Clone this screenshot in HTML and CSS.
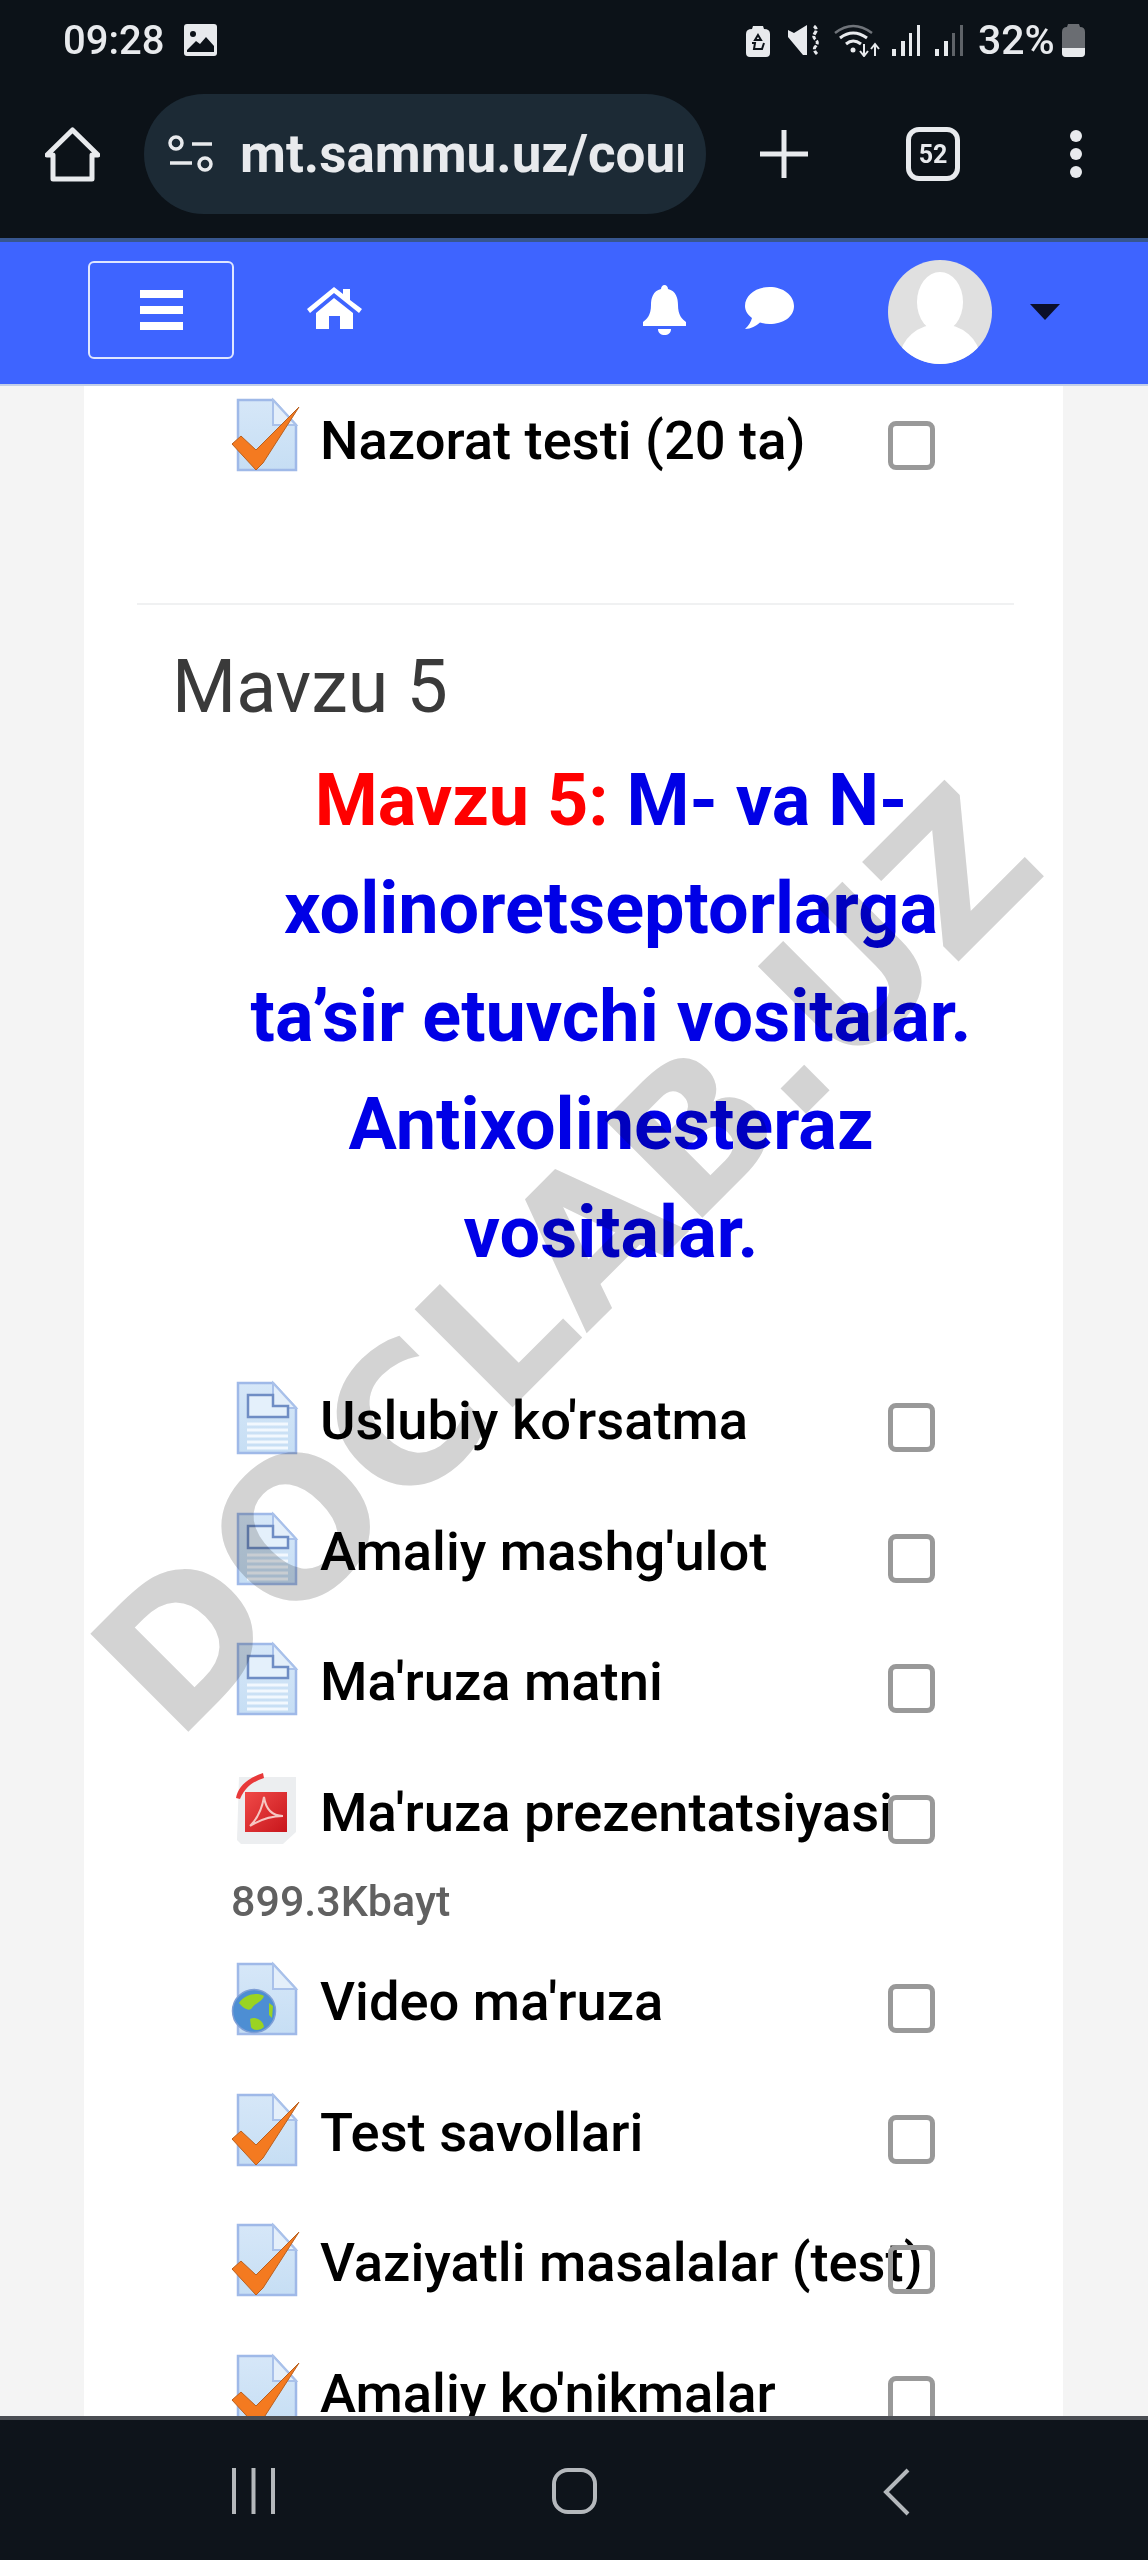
FILE: index.html
```html
<!DOCTYPE html>
<html lang="en">
<head>
    <meta charset="UTF-8">
    <meta name="viewport" content="width=device-width, initial-scale=1.0">
    <title>Mavzu 5</title>
    <link rel="stylesheet" href="styles.css">
</head>
<body>
    <!-- Shared activity icons -->
    <svg class="defs" width="0" height="0">
        <defs>
            <linearGradient id="pageFill" x1="0" y1="0" x2="0" y2="1">
                <stop offset="0" stop-color="#d6e7f8"/>
                <stop offset="1" stop-color="#c6def4"/>
            </linearGradient>
            <linearGradient id="pdfFill" x1="0" y1="0" x2="1" y2="1">
                <stop offset="0" stop-color="#f04a48"/>
                <stop offset="1" stop-color="#c8161c"/>
            </linearGradient>
            <symbol id="page" viewBox="0 0 72 76">
                <path d="M7 3H42L65 28V73H7Z" fill="url(#pageFill)" stroke="#9fb9e8" stroke-width="2.5"/>
                <path d="M42 3L65 28H42Z" fill="#e4effa" stroke="#a9c1ea" stroke-width="2"/>
            </symbol>
            <symbol id="check" viewBox="0 0 72 76">
                <path d="M1 47L10 39L25 53L68 10L32 66L25 73Z" fill="#f47a20" stroke="#b9601f" stroke-width="1"/>
            </symbol>
            <symbol id="lines" viewBox="0 0 72 76">
                <path d="M17 15H42V26H57V37H17Z" fill="#e4f0fb" stroke="#6f8dc4" stroke-width="2.5"/>
                <path d="M16 44H57M16 50H57M16 56H57M16 62H57M16 68H57" stroke="#f2f8fe" stroke-width="3"/>
            </symbol>
            <symbol id="globe" viewBox="0 0 72 76">
                <circle cx="23" cy="50" r="21.5" fill="#4d8ed3" stroke="#7f9fd6" stroke-width="1.5"/>
                <path d="M8 42C14 33 26 31 33 35C30 42 24 42 21 47C18 51 12 47 8 42Z" fill="#9ad322"/>
                <path d="M19 58C24 55 32 59 33 66C29 70 22 70 20 66Z" fill="#9ad322"/>
                <path d="M38 42L42 45L41 57L38 54Z" fill="#9ad322"/>
            </symbol>
            <symbol id="pdf" viewBox="0 0 72 76">
                <path d="M8 5H65V60L52 72H10L6 68Z" fill="#eceef0"/>
                <path d="M5 26C7 15 15 7 32 1L33 6C22 10 15 14 9 27Z" fill="#e8393a"/>
                <rect x="14" y="20" width="42" height="40" fill="url(#pdfFill)"/>
                <path d="M19 54C26 47 31 37 33 25C35 38 42 44 52 44C42 44 30 47 19 54Z" fill="none" stroke="#f6c6c2" stroke-width="2"/>
            </symbol>
        </defs>
    </svg>

    <div class="phone">
        <!-- Status bar -->
        <div class="status-bar">
            <span class="clock">09:28</span>
            <svg class="st-image" viewBox="0 0 33 32">
                <rect width="33" height="32" rx="3" fill="#e8eaed"/>
                <circle cx="9" cy="10" r="3" fill="#0c1218"/>
                <path d="M3 26L12 17L16 20L22 13L30 22V28H3Z" fill="#0c1218"/>
            </svg>
            <svg class="st-lock" viewBox="0 0 24 33">
                <path d="M7 2H17L18 5Q24 5 24 10V29Q24 33 20 33H4Q0 33 0 29V10Q0 5 6 5Z" fill="#e8eaed"/>
                <path d="M12 11L15 16H9ZM6 19L9 19L8 25H13M18 19L16 25H13" fill="none" stroke="#0c1218" stroke-width="2"/>
            </svg>
            <svg class="st-mute" viewBox="0 0 32 30">
                <path d="M0 5L6 8L19 0V30L15 30L0 12Z" fill="#e8eaed"/>
                <path d="M26 1Q30 4 27 8Q24 12 28 15Q31 18 27 22Q25 25 29 29" fill="none" stroke="#e8eaed" stroke-width="3" stroke-dasharray="4 1.500"/>
            </svg>
            <svg class="st-wifi" viewBox="0 0 48 34">
                <path d="M1 10Q19 -4 38 10" fill="none" stroke="#70747a" stroke-width="2.5"/>
                <path d="M6 15Q19 5 33 15M12 21Q19 15 27 21" fill="none" stroke="#e8eaed" stroke-width="3"/>
                <circle cx="19" cy="27" r="2.5" fill="#e8eaed"/>
                <path d="M30 21V32M26 28L30 33L34 28M41 33V22M37 26L41 21L45 26" fill="none" stroke="#e8eaed" stroke-width="2"/>
            </svg>
            <svg class="st-signal" viewBox="0 0 29 31">
                <path d="M0 24H4V31H0ZM9 16H13V31H9ZM17 8H20V31H17ZM25 0H28V31H25Z" fill="#e8eaed"/>
            </svg>
            <svg class="st-signal st-signal-second" viewBox="0 0 29 31">
                <path d="M0 24H4V31H0ZM9 16H13V31H9Z" fill="#e8eaed"/>
                <path d="M17 8H20V31H17ZM25 0H28V31H25Z" fill="#5f6368"/>
            </svg>
            <span class="battery-text">32%</span>
            <svg class="st-battery" viewBox="0 0 23 33">
                <path d="M6 0H17L18 3Q23 3 23 8V29Q23 33 19 33H4Q0 33 0 29V8Q0 3 5 3Z" fill="#6a6d72"/>
                <path d="M0 24H23V29Q23 33 19 33H4Q0 33 0 29Z" fill="#e8eaed"/>
            </svg>
        </div>

        <!-- Browser toolbar -->
        <div class="toolbar">
            <svg class="tb-home" viewBox="0 0 55 55">
                <path d="M2 28L27.5 3L53 28H47V52H8V28Z" fill="none" stroke="#e8eaed" stroke-width="5" stroke-linejoin="round"/>
            </svg>
            <div class="url-pill">
                <svg class="tb-sliders" viewBox="0 0 46 38">
                    <circle cx="8" cy="8" r="6" fill="none" stroke="#e8eaed" stroke-width="3.5"/>
                    <circle cx="37" cy="29" r="6" fill="none" stroke="#e8eaed" stroke-width="3.5"/>
                    <path d="M24 9H44M2 28H24" stroke="#e8eaed" stroke-width="3.5"/>
                </svg>
                <span class="url-text">mt.sammu.uz/course/view.php</span>
            </div>
            <svg class="tb-plus" viewBox="0 0 48 48">
                <path d="M24 0V48M0 24H48" stroke="#e8eaed" stroke-width="5"/>
            </svg>
            <div class="tab-count">52</div>
            <svg class="tb-dots" viewBox="0 0 12 48">
                <circle cx="6" cy="6" r="6" fill="#e8eaed"/>
                <circle cx="6" cy="24" r="6" fill="#e8eaed"/>
                <circle cx="6" cy="42" r="6" fill="#e8eaed"/>
            </svg>
        </div>

        <!-- Site navbar -->
        <div class="navbar">
            <div class="menu-btn">
                <span></span>
                <span></span>
                <span></span>
            </div>
            <svg class="nav-home" viewBox="0 0 55 42">
                <path d="M0 22L27 0L36 7V2H43V13L55 22L52 26L27 6L3 26Z" fill="#fff"/>
                <path d="M9 26L27 11L46 26V42H33V29H22V42H9Z" fill="#fff"/>
            </svg>
            <svg class="nav-bell" viewBox="0 0 43 50">
                <path d="M21.5 0C23.5 0 25 2 25 4C33 6 35 13 35 20C35 30 39 34 43 37V41H0V37C4 34 8 30 8 20C8 13 10 6 18 4C18 2 19.5 0 21.5 0Z" fill="#fff"/>
                <path d="M15 44H28C28 48 25 50 21.5 50C18 50 15 48 15 44Z" fill="#fff"/>
            </svg>
            <svg class="nav-chat" viewBox="0 0 49 42">
                <path d="M24.5 0C38 0 49 8 49 19C49 30 38 37 24.5 37C21 37 18 36.5 15 35.500C11 39 6 42 0 42C4 38 6 35 7 31C3 28 0 24 0 19C0 8 11 0 24.5 0Z" fill="#fff"/>
            </svg>
            <div class="avatar">
                <svg viewBox="0 0 104 104">
                    <ellipse cx="52" cy="42" rx="23" ry="30" fill="#fff"/>
                    <ellipse cx="52" cy="98" rx="40" ry="34" fill="#fff"/>
                </svg>
            </div>
            <div class="caret"></div>
        </div>

        <!-- Course content -->
        <div class="content">
            <div class="panel">
                <div class="row row-first">
                    <svg class="activity-icon"><use href="#page"/><use href="#check"/></svg>
                    <span class="row-text">Nazorat testi (20 ta)</span>
                    <span class="checkbox"></span>
                </div>

                <hr class="divider">

                <h3 class="section-name">Mavzu 5</h3>
                <h2 class="section-title">
                    <span class="red">Mavzu 5:</span> M- va N-xolinoretseptorlarga ta’sir etuvchi vositalar. Antixolinesteraz vositalar.
                </h2>

                <div class="activities">
                    <div class="row">
                        <svg class="activity-icon"><use href="#page"/><use href="#lines"/></svg>
                        <span class="row-text">Uslubiy ko'rsatma</span>
                        <span class="checkbox"></span>
                    </div>
                    <div class="row">
                        <svg class="activity-icon"><use href="#page"/><use href="#lines"/></svg>
                        <span class="row-text">Amaliy mashg'ulot</span>
                        <span class="checkbox"></span>
                    </div>
                    <div class="row">
                        <svg class="activity-icon"><use href="#page"/><use href="#lines"/></svg>
                        <span class="row-text">Ma'ruza matni</span>
                        <span class="checkbox"></span>
                    </div>
                    <div class="row">
                        <svg class="activity-icon"><use href="#pdf"/></svg>
                        <span class="row-text">Ma'ruza prezentatsiyasi</span>
                        <span class="checkbox"></span>
                        <span class="file-size">899.3Kbayt</span>
                    </div>
                    <div class="row">
                        <svg class="activity-icon"><use href="#page"/><use href="#globe"/></svg>
                        <span class="row-text">Video ma'ruza</span>
                        <span class="checkbox"></span>
                    </div>
                    <div class="row">
                        <svg class="activity-icon"><use href="#page"/><use href="#check"/></svg>
                        <span class="row-text">Test savollari</span>
                        <span class="checkbox"></span>
                    </div>
                    <div class="row">
                        <svg class="activity-icon"><use href="#page"/><use href="#check"/></svg>
                        <span class="row-text">Vaziyatli masalalar (test)</span>
                        <span class="checkbox"></span>
                    </div>
                    <div class="row">
                        <svg class="activity-icon"><use href="#page"/><use href="#check"/></svg>
                        <span class="row-text">Amaliy ko'nikmalar</span>
                        <span class="checkbox"></span>
                    </div>
                </div>
            </div>
            <div class="watermark">DOCLAB.UZ</div>
        </div>

        <!-- Android navigation -->
        <div class="bottom-nav">
            <svg class="bn-recents" viewBox="0 0 43 46">
                <path d="M2 0V46M21.500 0V46M41 0V46" stroke="#b4b8bc" stroke-width="4"/>
            </svg>
            <svg class="bn-home" viewBox="0 0 45 46">
                <rect x="2" y="2" width="41" height="42" rx="14" fill="none" stroke="#b4b8bc" stroke-width="4"/>
            </svg>
            <svg class="bn-back" viewBox="0 0 27 48">
                <path d="M25 2L3 24L25 46" fill="none" stroke="#b4b8bc" stroke-width="4"/>
            </svg>
        </div>
    </div>
</body>
</html>
```

FILE: styles.css
```css
/* Global Styles */
body {
    margin: 0;
    font-family: Roboto, 'Liberation Sans', sans-serif;
    background: #f4f4f4;
}

.defs {
    position: absolute;
}

.phone {
    width: 1148px;
    height: 2560px;
    display: flex;
    flex-direction: column;
    overflow: hidden;
}

/* Status bar */
.status-bar {
    height: 80px;
    flex-shrink: 0;
    display: flex;
    align-items: center;
    padding-left: 63px;
    background: #0c1218;
    color: #e8eaed;
}

.clock {
    width: 104px;
    font-size: 40px;
    font-weight: 500;
}

.st-image { width: 33px; height: 32px; margin-left: 17px; }
.st-lock { width: 24px; height: 33px; margin-left: 529px; }
.st-mute { width: 32px; height: 30px; margin-left: 18px; }
.st-wifi { width: 48px; height: 34px; margin-left: 14px; }
.st-signal { width: 29px; height: 31px; margin-left: 10px; }
.st-signal-second { margin-left: 14px; }
.st-battery { width: 23px; height: 33px; margin-left: 4px; }

.battery-text {
    width: 80px;
    margin-left: 14px;
    font-size: 41px;
    font-weight: 500;
}

/* Browser toolbar */
.toolbar {
    height: 158px;
    box-sizing: border-box;
    flex-shrink: 0;
    display: flex;
    align-items: center;
    padding: 0 0 10px 45px;
    background: #0c1218;
}

.tb-home { width: 55px; height: 55px; }
.tb-plus { width: 48px; height: 48px; margin-left: 54px; }
.tb-dots { width: 12px; height: 48px; margin-left: 110px; }

.url-pill {
    width: 562px;
    height: 120px;
    box-sizing: border-box;
    margin-left: 44px;
    padding: 0 23px 0 24px;
    display: flex;
    align-items: center;
    gap: 26px;
    border-radius: 60px;
    background: #1c2a35;
    overflow: hidden;
}

.tb-sliders {
    width: 46px;
    height: 38px;
    flex-shrink: 0;
}

.url-text {
    flex: 1;
    overflow: hidden;
    white-space: nowrap;
    font-size: 53px;
    font-weight: 700;
    color: #e8eaed;
}

.tab-count {
    width: 54px;
    height: 54px;
    box-sizing: border-box;
    margin-left: 98px;
    display: flex;
    align-items: center;
    justify-content: center;
    border: 5px solid #e8eaed;
    border-radius: 13px;
    font-size: 25px;
    font-weight: 700;
    color: #e8eaed;
}

/* Site navbar */
.navbar {
    height: 146px;
    box-sizing: border-box;
    flex-shrink: 0;
    display: flex;
    align-items: center;
    padding: 0 0 3px 88px;
    border-top: 4px solid #37568f;
    background: #3e64ff;
}

.menu-btn {
    width: 146px;
    height: 98px;
    box-sizing: border-box;
    margin-bottom: 3px;
    display: flex;
    flex-direction: column;
    align-items: center;
    justify-content: center;
    gap: 8px;
    border: 2px solid #dfe6ff;
    border-radius: 6px;
}

.menu-btn span {
    width: 43px;
    height: 8px;
    background: #fff;
}

.nav-home { width: 55px; height: 42px; margin: 0 0 8px 73px; }
.nav-bell { width: 43px; height: 50px; margin: 0 0 4px 281px; }
.nav-chat { width: 49px; height: 42px; margin: 0 0 8px 59px; }

.avatar {
    width: 104px;
    height: 104px;
    margin-left: 94px;
    border-radius: 50%;
    background: #e0e0e0;
    overflow: hidden;
}

.avatar svg {
    display: block;
}

.caret {
    width: 0;
    height: 0;
    margin-left: 38px;
    border-left: 15px solid transparent;
    border-right: 15px solid transparent;
    border-top: 16px solid #0b0f2a;
}

/* Course content */
.content {
    position: relative;
    flex: 1;
    min-height: 0;
    overflow: hidden;
    border-top: 2px solid #c3cfe8;
    background: #f4f4f4;
}

.panel {
    width: 979px;
    height: 100%;
    box-sizing: border-box;
    margin-left: 84px;
    padding-top: 11px;
    background: #fff;
}

.row {
    display: grid;
    grid-template-columns: 72px 552px 47px;
    column-gap: 17px;
    width: 705px;
    margin-left: 147px;
    min-height: 76px;
}

.activity-icon {
    width: 72px;
    height: 76px;
}

.row-text {
    margin-top: 12px;
    font-size: 54.300px;
    font-weight: 500;
    line-height: 64px;
    color: #000;
    white-space: nowrap;
}

.checkbox {
    width: 47px;
    height: 49px;
    box-sizing: border-box;
    margin-top: 24px;
    margin-left: -1px;
    border: 5px solid #999;
    border-radius: 8px;
}

.activities .row-text {
    margin-top: 9px;
}

.activities .checkbox {
    margin-top: 23px;
}

.file-size {
    grid-column: 1 / -1;
    margin: 27px 0 -20px;
    font-size: 43px;
    font-weight: 500;
    line-height: 52px;
    color: #616161;
}

.divider {
    height: 2px;
    margin: 130px 49px 0 53px;
    border: none;
    background: #f0f1f2;
}

.section-name {
    margin: 41px 0 0 88px;
    font-size: 73.500px;
    line-height: 82px;
    font-weight: 400;
    color: #3a3a3a;
}

.section-title {
    width: 750px;
    margin: 19px 0 0 152px;
    font-size: 72px;
    line-height: 108px;
    font-weight: 700;
    text-align: center;
    color: #0000e6;
}

.red {
    color: #ff0000;
}

.activities {
    display: flex;
    flex-direction: column;
    gap: 54.500px;
    margin-top: 93px;
}

/* Watermark sits over the page and darkens what is under it */
.watermark {
    position: absolute;
    left: 567px;
    top: 875px;
    transform: translate(-50%, -50%) rotate(-45deg);
    font-family: 'DejaVu Sans', sans-serif;
    font-size: 190px;
    font-weight: 700;
    line-height: 1;
    white-space: nowrap;
    color: #d3d3d3;
    mix-blend-mode: multiply;
}

/* Android navigation */
.bottom-nav {
    height: 144px;
    box-sizing: border-box;
    flex-shrink: 0;
    display: flex;
    align-items: flex-start;
    padding: 48px 0 0 232px;
    border-top: 4px solid #4a4d53;
    background: #0e141b;
}

.bn-recents { width: 43px; height: 46px; }
.bn-home { width: 45px; height: 46px; margin-left: 277px; }
.bn-back { width: 27px; height: 48px; margin-left: 286px; }
```
